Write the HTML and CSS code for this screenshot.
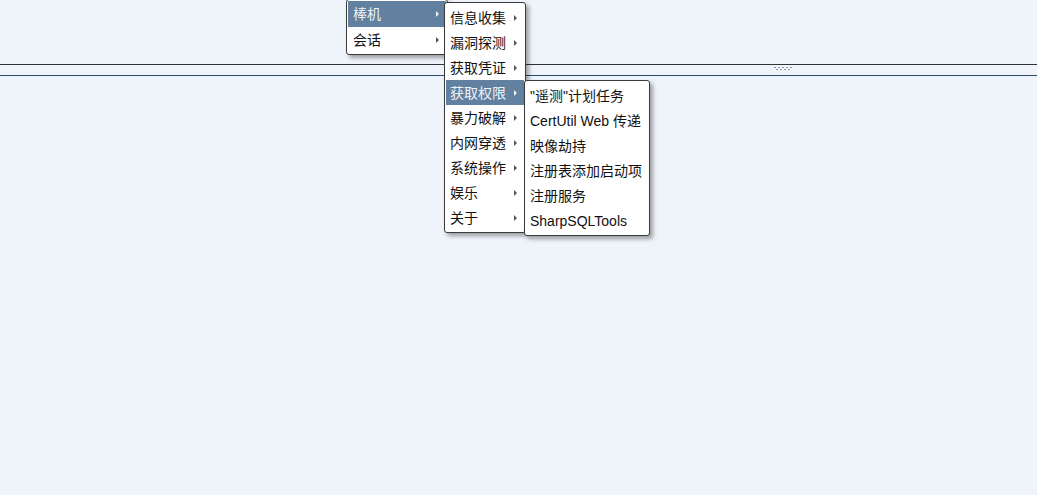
FILE: index.html
```html
<!DOCTYPE html>
<html lang="zh-CN">
<head>
    <meta charset="UTF-8">
    <title>Menu</title>
    <link rel="stylesheet" href="styles.css">
</head>
<body>
    <div class="workspace">
        <div class="pane-top"></div>
        <div class="splitter">
            <svg class="grip" width="18" height="4" viewBox="0 0 18 4">
                <g fill="#8695ab">
                    <rect x="0" y="0" width="2" height="1"/>
                    <rect x="4" y="0" width="2" height="1"/>
                    <rect x="8" y="0" width="2" height="1"/>
                    <rect x="12" y="0" width="2" height="1"/>
                    <rect x="16" y="0" width="2" height="1"/>
                    <rect x="2" y="2" width="2" height="1"/>
                    <rect x="6" y="2" width="2" height="1"/>
                    <rect x="10" y="2" width="2" height="1"/>
                    <rect x="14" y="2" width="2" height="1"/>
                </g>
            </svg>
        </div>
        <div class="pane-bottom"></div>
    </div>

    <ul class="menu menu-main">
        <li class="item active">棒机<span class="arrow"></span></li>
        <li class="item">会话<span class="arrow"></span></li>
    </ul>

    <ul class="menu menu-sub">
        <li class="item">信息收集<span class="arrow"></span></li>
        <li class="item">漏洞探测<span class="arrow"></span></li>
        <li class="item">获取凭证<span class="arrow"></span></li>
        <li class="item active">获取权限<span class="arrow"></span></li>
        <li class="item">暴力破解<span class="arrow"></span></li>
        <li class="item">内网穿透<span class="arrow"></span></li>
        <li class="item">系统操作<span class="arrow"></span></li>
        <li class="item">娱乐<span class="arrow"></span></li>
        <li class="item">关于<span class="arrow"></span></li>
    </ul>

    <ul class="menu menu-leaf">
        <li class="item">"遥测"计划任务</li>
        <li class="item">CertUtil Web 传递</li>
        <li class="item">映像劫持</li>
        <li class="item">注册表添加启动项</li>
        <li class="item">注册服务</li>
        <li class="item">SharpSQLTools</li>
    </ul>
</body>
</html>
```

FILE: styles.css
```css
body {
    margin: 0;
    background-color: #eff3fa;
    font-family: "Liberation Sans", "Noto Sans CJK SC", sans-serif;
    font-size: 14px;
    color: #111;
    overflow: hidden;
}

.workspace {
    display: flex;
    flex-direction: column;
    height: 495px;
}

.pane-top {
    height: 64px;
}

.splitter {
    height: 10px;
    border-top: 1px solid #333;
    border-bottom: 1px solid #2b4a6b;
    padding-left: 774px;
}

.grip {
    display: block;
    margin-top: 2px;
}

.pane-bottom {
    flex: 1;
}

.menu {
    position: absolute;
    margin: 0;
    padding: 2px 1px;
    list-style: none;
    background: #fff;
    border: 1px solid #3a3a3a;
    border-radius: 3px;
    box-shadow: 3px 3px 4px rgba(0, 0, 0, 0.35);
}

.menu-main {
    left: 346px;
    top: -1px;
    width: 98px;
    padding: 1px;
}

.menu-sub {
    left: 444px;
    top: 2px;
    width: 78px;
}

.menu-leaf {
    left: 524px;
    top: 80px;
    width: 122px;
}

.item {
    position: relative;
    height: 24px;
    padding: 1px 0 0 4px;
    line-height: 25px;
    white-space: nowrap;
}

.menu-main .item {
    height: 25px;
    padding-left: 5px;
}

.item.active {
    background-color: #62809f;
    color: #eef3f8;
}

.arrow {
    position: absolute;
    right: 7px;
    top: 10px;
    width: 0;
    height: 0;
    border-top: 3px solid transparent;
    border-bottom: 3px solid transparent;
    border-left: 3px solid #555;
}

.item.active .arrow {
    border-left-color: #f0f0f0;
}
```
